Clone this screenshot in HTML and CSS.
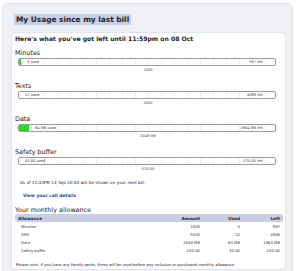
FILE: index.html
```html
<!DOCTYPE html>
<html lang="en">
<head>
  <meta charset="UTF-8">
  <title>My Usage</title>
  <link rel="stylesheet" href="styles.css">
</head>
<body>
  <div class="panel">
    <h1 class="title"><span>My Usage since my last bill</span></h1>
    <div class="card">
      <h2>Here's what you've got left until 11:59pm on 08 Oct</h2>

      <div class="meter">
        <div class="meter-label">Minutes</div>
        <div class="bar">
          <div class="fill" style="width: 2px"></div>
          <span class="used">3 used</span>
          <span class="left">997 left</span>
        </div>
        <div class="max">1000</div>
      </div>

      <div class="meter">
        <div class="meter-label">Texts</div>
        <div class="bar">
          <span class="used">12 used</span>
          <span class="left">4988 left</span>
        </div>
        <div class="max">5000</div>
      </div>

      <div class="meter">
        <div class="meter-label">Data</div>
        <div class="bar">
          <div class="fill" style="width: 10px"></div>
          <span class="used">64 MB used</span>
          <span class="left">1964 MB left</span>
        </div>
        <div class="max">2048 MB</div>
      </div>

      <div class="meter">
        <div class="meter-label">Safety buffer</div>
        <div class="bar">
          <span class="used">£0.00 used</span>
          <span class="left">£20.00 left</span>
        </div>
        <div class="max">£20.00</div>
      </div>

      <p class="note">As of 11:44PM 14 Sep £0.00 will be shown on your next bill.</p>
      <a class="details" href="#">View your call details</a>

      <h3 class="section">Your monthly allowance</h3>
      <table class="allowance">
        <thead>
          <tr><th>Allowance</th><th>Amount</th><th>Used</th><th>Left</th></tr>
        </thead>
        <tbody>
          <tr><td>Minutes</td><td>1000</td><td>3</td><td>997</td></tr>
          <tr><td>SMS</td><td>5000</td><td>12</td><td>4988</td></tr>
          <tr><td>Data</td><td>2048 MB</td><td>64 MB</td><td>1964 MB</td></tr>
          <tr><td>Safety buffer</td><td>£20.00</td><td>£0.00</td><td>£20.00</td></tr>
        </tbody>
      </table>

      <p class="perks">Please note, if you have any Family perks, these will be used before any inclusive or purchased monthly allowance.</p>
    </div>
  </div>
</body>
</html>
```

FILE: styles.css
```css
body {
  margin: 0;
  background-color: #fff;
  font-family: "DejaVu Sans", Verdana, sans-serif;
  color: #222;
}

.panel {
  margin: 3px 7px 2px 2px;
  padding: 11px 6px 4px 8px;
  background-color: #eff0f5;
  border: 1px solid #e0e2ea;
  border-bottom-color: #b9bcc6;
  border-radius: 6px;
}

.title {
  margin: 0 0 8px 3px;
  font-size: 7.4px;
  line-height: 9px;
}

.title span {
  background-color: #c9cde6;
  padding: 1px 2px;
}

.card {
  background-color: #fff;
  border: 1px solid #e3e5ec;
  border-radius: 4px;
  padding: 1px 4px 1px 3px;
}

.card h2 {
  margin: 0 0 4px 0;
  font-size: 6.1px;
  line-height: 10px;
}

.meter {
  margin-bottom: 7px;
}

.meter-label {
  font-size: 6.4px;
  line-height: 10px;
}

.bar {
  margin: 0 5px 0 3px;
  height: 6px;
  border: 1px solid #9a9a9a;
  border-radius: 2px;
  overflow: hidden;
  display: flex;
  align-items: center;
  background: repeating-linear-gradient(to right, transparent 0, transparent 12px, #ececec 12px, #ececec 13px);
  font-size: 3.6px;
  color: #444;
}

.fill {
  align-self: stretch;
  background-color: #1ee01e;
}

.used {
  margin-left: 6px;
}

.left {
  margin-left: auto;
  margin-right: 12px;
}

.max {
  text-align: center;
  font-size: 3.6px;
  line-height: 8px;
  color: #444;
}

.note {
  margin: 3px 0 7px 5px;
  font-size: 4.2px;
  line-height: 6px;
}

.details {
  display: block;
  margin-left: 8px;
  font-size: 4.4px;
  font-weight: bold;
  color: #2a3f9c;
  text-decoration: none;
  line-height: 6px;
}

.section {
  margin: 7px 0 0 0;
  font-size: 6.4px;
  font-weight: normal;
  line-height: 8px;
  color: #222;
}

.allowance {
  width: 268px;
  border-collapse: collapse;
  font-size: 3.8px;
}

.allowance th {
  background-color: #c9cde6;
  height: 8px;
  padding: 0 3px;
  text-align: right;
  font-size: 4.2px;
}

.allowance th:first-child {
  text-align: left;
  border-radius: 3px 0 0 3px;
}

.allowance th:last-child {
  border-radius: 0 3px 3px 0;
}

.allowance td {
  height: 8px;
  padding: 0 3px;
  text-align: right;
  color: #333;
}

.allowance td:first-child {
  text-align: left;
  padding-left: 6px;
}

.allowance th:nth-child(2),
.allowance td:nth-child(2) {
  width: 50px;
}

.allowance th:nth-child(3),
.allowance td:nth-child(3) {
  width: 34px;
}

.allowance th:nth-child(4),
.allowance td:nth-child(4) {
  width: 34px;
}

.perks {
  margin: 8px 0 0 1px;
  font-size: 3.8px;
  line-height: 6px;
}
```
